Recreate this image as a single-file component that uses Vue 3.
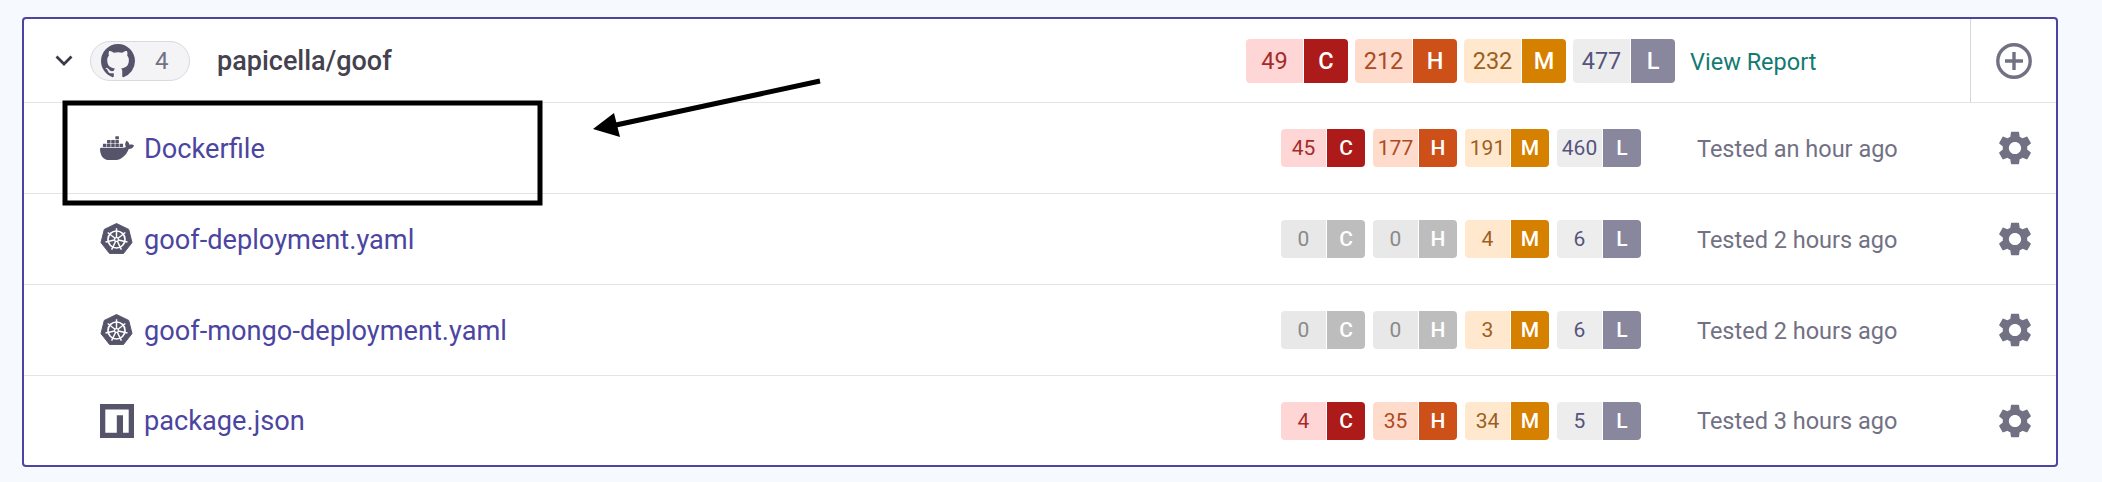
<script setup>
const gh = 'M8 0C3.58 0 0 3.58 0 8c0 3.54 2.29 6.53 5.47 7.59.4.07.55-.17.55-.38 0-.19-.01-.82-.01-1.49-2.01.37-2.53-.49-2.69-.94-.09-.23-.48-.94-.82-1.13-.28-.15-.68-.52-.01-.53.63-.01 1.08.58 1.23.82.72 1.21 1.87.87 2.33.66.07-.52.28-.87.51-1.07-1.78-.2-3.64-.89-3.64-3.95 0-.87.31-1.59.82-2.15-.08-.2-.36-1.02.08-2.12 0 0 .67-.21 2.2.82.64-.18 1.32-.27 2-.27.68 0 1.36.09 2 .27 1.53-1.04 2.2-.82 2.2-.82.44 1.1.16 1.92.08 2.12.51.56.82 1.27.82 2.15 0 3.07-1.87 3.75-3.65 3.95.29.25.54.73.54 1.48 0 1.07-.01 1.93-.01 2.2 0 .21.15.46.55.38A8.013 8.013 0 0016 8c0-4.42-3.58-8-8-8z'
const docker = 'M13.983 11.078h2.119a.186.186 0 00.186-.185V9.006a.186.186 0 00-.186-.186h-2.119a.185.185 0 00-.185.185v1.888c0 .102.083.185.185.185m-2.954-5.43h2.118a.186.186 0 00.186-.186V3.574a.186.186 0 00-.186-.185h-2.118a.185.185 0 00-.185.185v1.888c0 .102.082.185.185.186m0 2.716h2.118a.187.187 0 00.186-.186V6.29a.186.186 0 00-.186-.185h-2.118a.185.185 0 00-.185.185v1.887c0 .102.082.185.185.186m-2.93 0h2.12a.186.186 0 00.184-.186V6.29a.185.185 0 00-.185-.185H8.1a.185.185 0 00-.185.185v1.887c0 .102.083.185.185.186m-2.964 0h2.119a.186.186 0 00.185-.186V6.29a.185.185 0 00-.185-.185H5.136a.186.186 0 00-.186.185v1.887c0 .102.084.185.186.186m5.893 2.715h2.118a.186.186 0 00.186-.185V9.006a.186.186 0 00-.186-.186h-2.118a.185.185 0 00-.185.185v1.888c0 .102.082.185.185.185m-2.93 0h2.12a.185.185 0 00.184-.185V9.006a.185.185 0 00-.184-.186h-2.12a.185.185 0 00-.184.185v1.888c0 .102.083.185.185.185m-2.964 0h2.119a.185.185 0 00.185-.185V9.006a.185.185 0 00-.184-.186h-2.12a.186.186 0 00-.186.186v1.887c0 .102.084.185.186.185m-2.92 0h2.12a.185.185 0 00.184-.185V9.006a.185.185 0 00-.184-.186h-2.12a.185.185 0 00-.184.185v1.888c0 .102.082.185.185.185M23.763 9.89c-.065-.051-.672-.51-1.954-.51-.338.001-.676.03-1.01.087-.248-1.7-1.653-2.53-1.716-2.566l-.344-.199-.226.327c-.284.438-.49.922-.612 1.43-.23.97-.09 1.882.403 2.661-.595.332-1.55.413-1.744.42H.751a.751.751 0 00-.75.748 11.376 11.376 0 00.692 4.062c.545 1.428 1.355 2.48 2.41 3.124 1.18.723 3.1 1.137 5.275 1.137.983.003 1.963-.086 2.93-.266a12.248 12.248 0 003.823-1.389c.98-.567 1.86-1.288 2.61-2.136 1.252-1.418 1.998-2.997 2.553-4.4h.221c1.372 0 2.215-.549 2.68-1.009.309-.293.55-.65.707-1.046l.098-.288Z'
const gear = 'M19.14 12.94c.04-.3.06-.61.06-.94 0-.32-.02-.64-.07-.94l2.03-1.58c.18-.14.23-.41.12-.61l-1.92-3.32c-.12-.22-.37-.29-.59-.22l-2.39.96c-.5-.38-1.03-.7-1.62-.94l-.36-2.54c-.04-.24-.24-.41-.48-.41h-3.84c-.24 0-.43.17-.47.41l-.36 2.54c-.59.24-1.13.57-1.62.94l-2.39-.96c-.22-.08-.47 0-.59.22L2.74 8.87c-.12.21-.08.47.12.61l2.03 1.58c-.05.3-.09.63-.09.94s.02.64.07.94l-2.03 1.58c-.18.14-.23.41-.12.61l1.92 3.32c.12.22.37.29.59.22l2.39-.96c.5.38 1.03.7 1.62.94l.36 2.54c.05.24.24.41.48.41h3.84c.24 0 .44-.17.47-.41l.36-2.54c.59-.24 1.13-.56 1.62-.94l2.39.96c.22.08.47 0 .59-.22l1.92-3.32c.12-.22.07-.47-.12-.61l-2.01-1.58zM12 15.6c-1.98 0-3.6-1.62-3.6-3.6s1.62-3.6 3.6-3.6 3.6 1.62 3.6 3.6-1.62 3.6-3.6 3.6z'

const spokes = [0, 1, 2, 3, 4, 5, 6].map(i => i * (360 / 7))
const letters = ['C', 'H', 'M', 'L']
const sev = ['c', 'h', 'm', 'l']
const headerCounts = [49, 212, 232, 477]

const rows = [
  { name: 'Dockerfile', icon: 'docker', counts: [45, 177, 191, 460], time: 'Tested an hour ago' },
  { name: 'goof-deployment.yaml', icon: 'k8s', counts: [0, 0, 4, 6], time: 'Tested 2 hours ago' },
  { name: 'goof-mongo-deployment.yaml', icon: 'k8s', counts: [0, 0, 3, 6], time: 'Tested 2 hours ago' },
  { name: 'package.json', icon: 'npm', counts: [4, 35, 34, 5], time: 'Tested 3 hours ago' }
]

function cls(i, n) {
  return n === 0 && i < 2 ? 'off' : sev[i]
}
</script>

<template>
  <div class="page">
    <div class="card">
      <div class="head">
        <svg class="chev" viewBox="0 0 18 11" width="18" height="11">
          <path d="M1.5 1.5 9 9l7.5-7.5" fill="none" stroke="#3a3a48" stroke-width="2.8" />
        </svg>
        <div class="pill">
          <svg viewBox="0 0 16 16" width="34" height="34"><path :d="gh" fill="#55546a" /></svg>
          <span class="pill-n">4</span>
        </div>
        <div class="project">papicella/goof</div>
        <div class="badges big">
          <div v-for="(n, i) in headerCounts" :key="i" class="badge" :class="sev[i]">
            <span class="num">{{ n }}</span><span class="let">{{ letters[i] }}</span>
          </div>
        </div>
        <a class="report">View Report</a>
        <div class="add">
          <svg viewBox="0 0 36 36" width="36" height="36">
            <circle cx="18" cy="18" r="16.2" fill="none" stroke="#727184" stroke-width="3.4" />
            <path d="M18 9v18M9 18h18" stroke="#727184" stroke-width="3.4" />
          </svg>
        </div>
      </div>

      <div v-for="r in rows" :key="r.name" class="row">
        <div class="ficon">
          <svg v-if="r.icon === 'docker'" viewBox="0 3.3 24 17.4" width="34" height="24.6">
            <path :d="docker" fill="#55546a" />
          </svg>
          <svg v-else-if="r.icon === 'k8s'" viewBox="0 0 34 33" width="33" height="32">
            <path d="M17 0.5 29.6 6.6 33 20.2 24.2 31.4H9.8L1 20.2 4.4 6.6Z" fill="#55546a" stroke="#55546a" stroke-linejoin="round" />
            <g fill="none" stroke="#fff">
              <circle cx="17" cy="17" r="8.8" stroke-width="1.7" />
              <circle cx="17" cy="17" r="2" stroke-width="1.3" />
              <g stroke-width="1.5">
                <path v-for="a in spokes" :key="a" d="M17 15V5.4" :transform="`rotate(${a} 17 17)`" />
              </g>
            </g>
          </svg>
          <svg v-else viewBox="0 0 34 34" width="34" height="34">
            <path d="M0 0h34v34H0z" fill="#55546a" />
            <path d="M5.3 5.5h23.4v23.2H23V11.2h-6.2v17.5H5.3z" fill="#fff" />
          </svg>
        </div>
        <a class="fname">{{ r.name }}</a>
        <div class="badges">
          <div v-for="(n, i) in r.counts" :key="i" class="badge" :class="cls(i, n)">
            <span class="num">{{ n }}</span><span class="let">{{ letters[i] }}</span>
          </div>
        </div>
        <div class="time">{{ r.time }}</div>
        <svg class="gear" viewBox="2.6 2 18.8 20" width="32" height="34"><path :d="gear" fill="#727184" /></svg>
      </div>
    </div>

    <svg class="notes" width="2102" height="482" viewBox="0 0 2102 482">
      <rect x="65" y="103" width="475" height="100" fill="none" stroke="#000" stroke-width="5" />
      <path d="M820 81 616 125" stroke="#000" stroke-width="5" fill="none" />
      <path d="M593 129 614 113 620 137Z" fill="#000" />
    </svg>
  </div>
</template>

<style>
html, body { margin: 0; background: #f6f9fd; }
</style>

<style scoped>
.page {
  position: relative;
  box-sizing: border-box;
  width: 2102px;
  height: 482px;
  padding: 17px 44px 0 22px;
  background: #f6f9fd;
  font-family: Roboto, "Liberation Sans", sans-serif;
}
.card {
  box-sizing: border-box;
  background: #fff;
  border: 2px solid #4c44a0;
  border-radius: 4px;
}
.head {
  display: flex;
  align-items: center;
  height: 84px;
  box-sizing: border-box;
  padding-left: 31px;
  border-bottom: 1px solid #e4e4e8;
}
.chev { flex: none; }
.pill {
  display: flex;
  align-items: center;
  box-sizing: border-box;
  width: 100px;
  height: 40px;
  margin-left: 17px;
  padding-left: 10px;
  background: #f4f4f7;
  border: 1px solid #d9d9df;
  border-radius: 20px;
  overflow: hidden;
}
.pill-n {
  margin-left: 20px;
  font-size: 24px;
  color: #727184;
}
.project {
  flex: 1;
  margin-left: 27px;
  font-size: 27px;
  font-weight: 500;
  color: #43424e;
}
.badges {
  display: flex;
  gap: 8px;
}
.badge {
  display: flex;
  width: 84px;
  height: 38px;
  border-radius: 4px;
  overflow: hidden;
  font-size: 21px;
  line-height: 38px;
  text-align: center;
}
.num { width: 45px; }
.let {
  width: 38px;
  margin-left: 1px;
  color: #fff;
  font-weight: 500;
}
.big { gap: 7px; }
.big .badge {
  width: 102px;
  height: 44px;
  font-size: 23.5px;
  line-height: 44px;
}
.big .num { width: 57px; }
.big .let { width: 44px; }
.c .num { background: #ffd6d6; color: #a52b2b; }
.c .let { background: #ad1a1a; }
.h .num { background: #ffdbcc; color: #ad4a1f; }
.h .let { background: #ce5019; }
.m .num { background: #ffe8ce; color: #9c5f1f; }
.m .let { background: #d68000; }
.l .num { background: #ededee; color: #55547c; }
.l .let { background: #88879e; }
.off .num { background: #e8e8e8; color: #8a8a8a; }
.off .let { background: #bdbdbd; }
.report {
  width: 280px;
  margin-left: 15px;
  padding-top: 3px;
  font-size: 23.5px;
  color: #137a72;
}
.add {
  display: flex;
  align-items: center;
  justify-content: center;
  flex: none;
  width: 86px;
  height: 100%;
  border-left: 1px solid #d6d6da;
  box-sizing: border-box;
}
.row {
  display: flex;
  align-items: center;
  height: 91px;
  box-sizing: border-box;
  padding: 0 25px 0 76px;
  border-bottom: 1px solid #e4e4e8;
}
.row:last-child {
  height: 89px;
  border-bottom: 0;
}
.ficon {
  display: flex;
  align-items: center;
  width: 44px;
  flex: none;
}
.fname {
  flex: 1;
  padding-top: 1px;
  font-size: 27.2px;
  color: #4b45a1;
}
.time {
  width: 302px;
  margin-left: 56px;
  padding-top: 1px;
  font-size: 23.5px;
  color: #727184;
}
.gear { flex: none; }
.notes {
  position: absolute;
  left: 0;
  top: 0;
  pointer-events: none;
}
</style>
